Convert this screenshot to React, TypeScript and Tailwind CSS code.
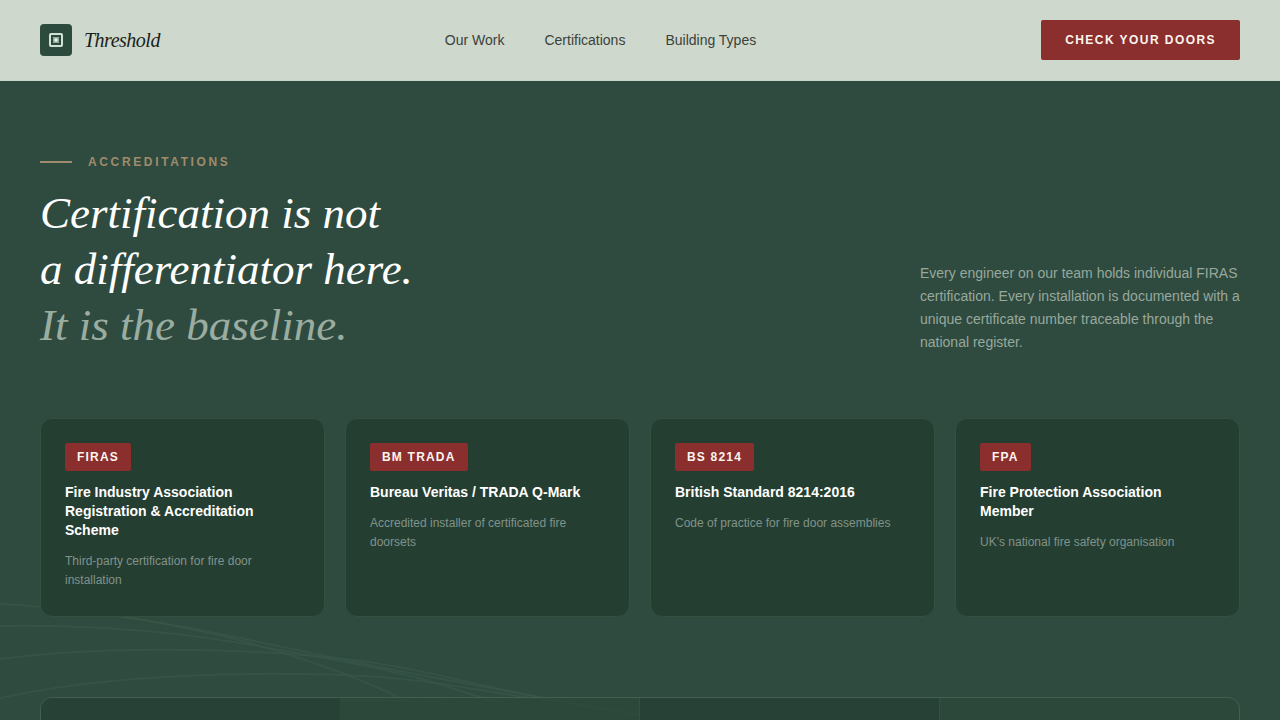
const navLinks = ["Our Work", "Certifications", "Building Types"];

const accreditations = [
  {
    code: "FIRAS",
    title: "Fire Industry Association Registration & Accreditation Scheme",
    description: "Third-party certification for fire door installation",
  },
  {
    code: "BM TRADA",
    title: "Bureau Veritas / TRADA Q-Mark",
    description: "Accredited installer of certificated fire doorsets",
  },
  {
    code: "BS 8214",
    title: "British Standard 8214:2016",
    description: "Code of practice for fire door assemblies",
  },
  {
    code: "FPA",
    title: "Fire Protection Association Member",
    description: "UK's national fire safety organisation",
  },
];

function Logo() {
  return (
    <a href="#" className="flex items-center gap-3">
      <span className="flex size-8 items-center justify-center rounded-sm bg-[#2d4a3e]">
        <svg width="16" height="16" viewBox="0 0 16 16" fill="none">
          <rect x="2" y="2" width="12" height="12" rx="1" stroke="#cfe0d4" strokeWidth="2" />
          <rect x="5" y="5" width="6" height="6" fill="#8fa698" />
          <rect x="6.5" y="6.5" width="3" height="3" fill="#f0f5ef" />
        </svg>
      </span>
      <span className="font-['Liberation_Serif',serif] text-xl tracking-tight text-[#1a1f1c] italic">Threshold</span>
    </a>
  );
}

function Header() {
  return (
    <header className="border-b border-[#c9d4c9] bg-[#cfd8cc]">
      <div className="flex h-20 items-center justify-between px-10">
        <Logo />
        <nav className="flex gap-10 text-sm text-[#3a423c]">
          {navLinks.map((label) => (
            <a key={label} href="#" className="hover:text-[#1a1f1c]">
              {label}
            </a>
          ))}
        </nav>
        <button className="h-10 rounded-xs bg-[#8b2e2e] px-6 text-xs font-bold tracking-[0.12em] text-[#faf5ee] uppercase">
          Check your doors
        </button>
      </div>
    </header>
  );
}

// Faint contour lines behind the lower left of the section
function ContourLines() {
  return (
    <svg
      className="pointer-events-none absolute top-[509px] left-0"
      width="720"
      height="160"
      viewBox="0 590 720 160"
      fill="none"
      stroke="#38574a"
      strokeWidth="2"
      strokeOpacity="0.6"
      aria-hidden="true"
    >
      <path d="M0 604C120 610 230 636 330 657S520 694 660 718" />
      <path d="M0 626C150 624 240 642 340 661S440 686 490 700S560 716 600 722" />
      <path d="M0 659C100 646 220 649 290 654S400 666 460 680S570 704 640 716" />
      <path d="M0 698C100 676 220 673 300 674S420 680 480 690S600 706 660 720" />
      <path d="M130 720C200 708 260 701 340 700S480 704 560 720" />
      <path d="M110 615C200 628 260 644 320 665S380 690 410 702S440 714 450 720" />
    </svg>
  );
}

export default function App() {
  return (
    <div className="flex h-screen flex-col overflow-hidden bg-[#2f4b3f] font-['Liberation_Sans',Arial,sans-serif]">
      <Header />

      <section className="relative flex-1">
        <ContourLines />
        <div className="relative px-10 pt-18">
          <div className="flex items-end justify-between gap-10">
            <div>
              <div className="mb-3.5 flex items-center gap-4">
                <span className="h-0.5 w-8 bg-[#a08b6c]" />
                <span className="text-xs leading-[18px] font-bold tracking-[0.22em] text-[#a08b6c] uppercase">
                  Accreditations
                </span>
              </div>
              <h1 className="pb-px font-['Liberation_Serif',serif] text-[45px] leading-14 text-white italic">
                Certification is not
                <br />
                a differentiator here.
                <br />
                <span className="text-[#9bada1]">It is the baseline.</span>
              </h1>
            </div>
            <p className="w-80 text-sm leading-[23px] text-[#97a89d]">
              Every engineer on our team holds individual FIRAS certification. Every installation is documented with a
              unique certificate number traceable through the national register.
            </p>
          </div>

          <div className="mt-16 grid grid-cols-4 gap-5">
            {accreditations.map((item) => (
              <article key={item.code} className="rounded-xl border border-[#34503f] bg-[#253e32] px-6 pt-6 pb-[26px]">
                <span className="inline-block rounded-xs bg-[#8b2e2e] px-3 py-1.5 align-top text-xs font-bold tracking-widest text-[#faf5ee]">
                  {item.code}
                </span>
                <h2 className="mt-3 text-sm leading-[19px] font-bold text-white">{item.title}</h2>
                <p className="mt-3 text-xs leading-[19px] text-[#80938a]">{item.description}</p>
              </article>
            ))}
          </div>

          <div className="mt-20 grid h-40 grid-cols-4 overflow-hidden rounded-xl border border-[#41604f] bg-[#2b473b]/80">
            <div className="border-r border-[#30493e] bg-[#284036]/80" />
            <div className="border-r border-[#34503f]" />
            <div className="border-r border-[#34503f] bg-[#284036]/80" />
            <div />
          </div>
        </div>
      </section>
    </div>
  );
}
